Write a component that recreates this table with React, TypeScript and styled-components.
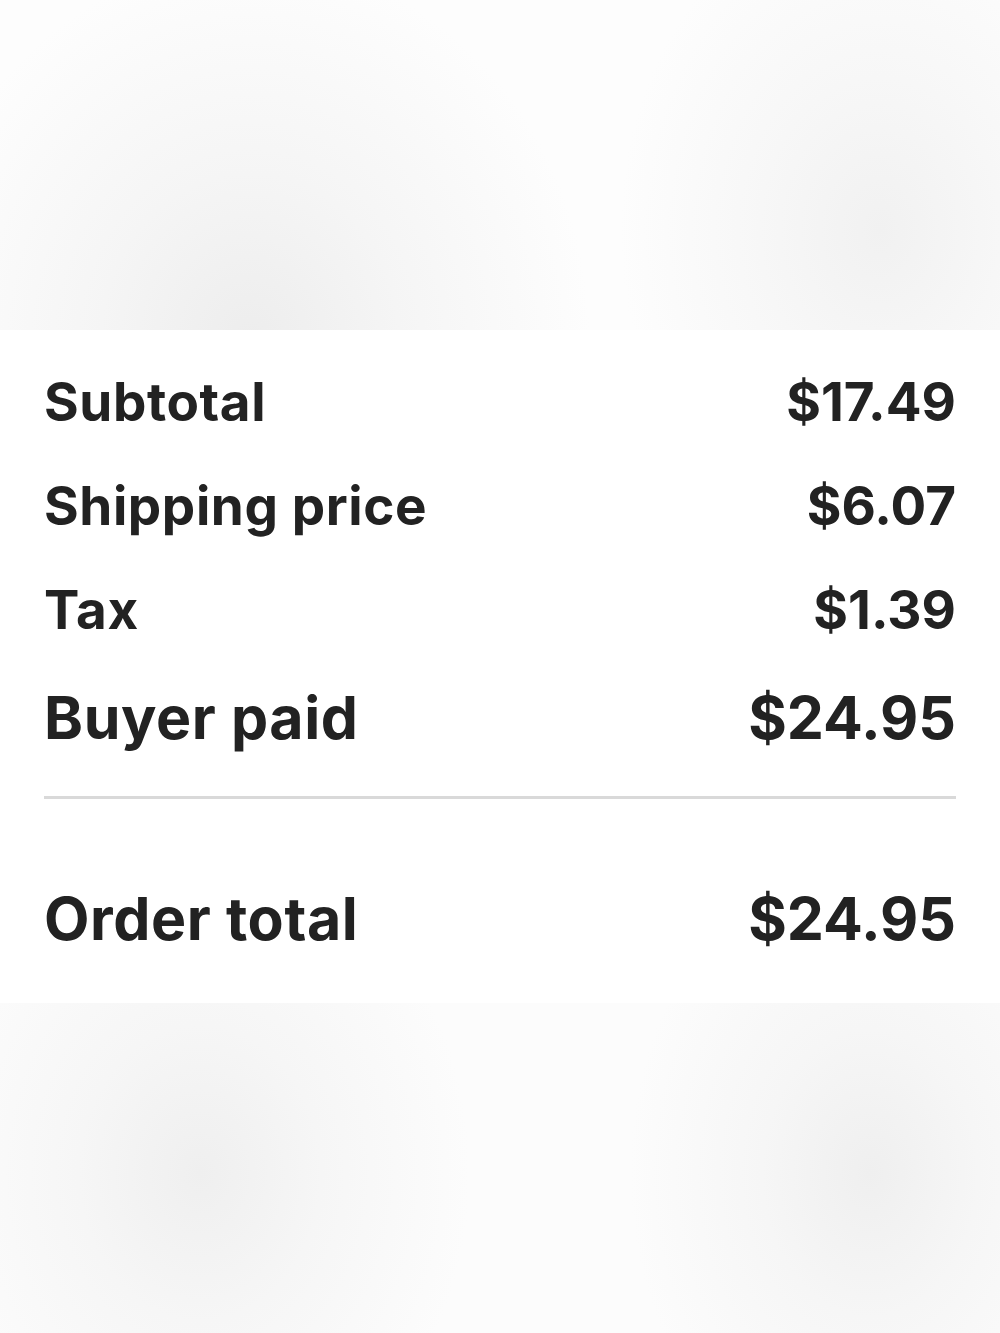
import React from 'react';
import { createGlobalStyle, styled } from 'styled-components';

const GlobalStyle = createGlobalStyle`
  html, body {
    margin: 0;
    padding: 0;
    background: #ffffff;
  }
  body {
    font-family: Inter, "Liberation Sans", sans-serif;
    color: #222222;
  }
`;

const Page = styled.div`
  width: 1000px;
  height: 1333px;
  display: flex;
  flex-direction: column;
  overflow: hidden;
`;

const BlurTop = styled.div`
  height: 330px;
  flex: none;
  background:
    radial-gradient(ellipse 340px 380px at 250px 340px, #ededed 0%, rgba(240, 240, 240, 0.6) 45%, rgba(255, 255, 255, 0) 100%),
    radial-gradient(ellipse 260px 330px at 880px 230px, #f1f1f1 0%, rgba(242, 242, 242, 0.5) 50%, rgba(255, 255, 255, 0) 100%),
    #fdfdfd;
`;

const BlurBottom = styled.div`
  height: 330px;
  flex: none;
  background:
    radial-gradient(ellipse 270px 330px at 200px 170px, #efefef 0%, rgba(242, 242, 242, 0.6) 45%, rgba(255, 255, 255, 0) 100%),
    radial-gradient(ellipse 240px 320px at 870px 170px, #efefef 0%, rgba(242, 242, 242, 0.6) 45%, rgba(255, 255, 255, 0) 100%),
    #fcfcfc;
`;

const Panel = styled.div`
  flex: 1;
  background: #ffffff;
  padding: 46px 44px 0 44px;
  display: flex;
  flex-direction: column;
`;

const Row = styled.div<{ $big?: boolean }>`
  display: flex;
  justify-content: space-between;
  align-items: baseline;
  height: ${({ $big }) => ($big ? '110px' : '104px')};
  line-height: 1;
  font-size: ${({ $big }) => ($big ? '59px' : '53px')};
  font-weight: 700;
  letter-spacing: ${({ $big }) => ($big ? '0.6px' : '0.6px')};
`;

const Label = styled.span``;
const Amount = styled.span`
  letter-spacing: 0;
`;

const Divider = styled.hr`
  border: none;
  height: 3px;
  background: #d9d9d9;
  margin: -2px 0 90px 0;
`;

const lines = [
  { label: 'Subtotal', amount: '$17.49' },
  { label: 'Shipping price', amount: '$6.07' },
  { label: 'Tax', amount: '$1.39' },
];

export default function App() {
  return (
    <Page>
      <GlobalStyle />
      <BlurTop />
      <Panel>
        {lines.map((l) => (
          <Row key={l.label}>
            <Label>{l.label}</Label>
            <Amount>{l.amount}</Amount>
          </Row>
        ))}
        <Row $big>
          <Label>Buyer paid</Label>
          <Amount>$24.95</Amount>
        </Row>
        <Divider />
        <Row $big>
          <Label>Order total</Label>
          <Amount>$24.95</Amount>
        </Row>
      </Panel>
      <BlurBottom />
    </Page>
  );
}
